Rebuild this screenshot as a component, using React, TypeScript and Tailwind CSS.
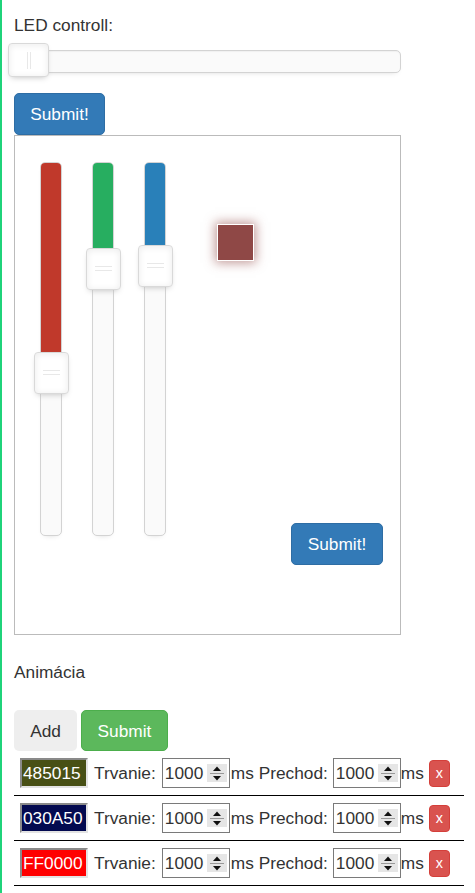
import React from "react";

type Step = { color: string; hex: string };

const steps: Step[] = [
  { color: "#485015", hex: "485015" },
  { color: "#030A50", hex: "030A50" },
  { color: "#FF0000", hex: "FF0000" },
];

function Handle({ vertical }: { vertical?: boolean }) {
  return (
    <div
      className={
        "absolute bg-white border border-[#d9d9d9] rounded-[4px] shadow-[inset_0_0_1px_#fff,inset_0_1px_7px_#ebebeb,0_3px_6px_-3px_#bbb] " +
        (vertical ? "w-[35px] h-[42px] left-[-7px]" : "w-[41px] h-[34px] top-[-8px] left-[-7px]")
      }
    >
      {vertical ? (
        <>
          <div className="absolute left-[8px] top-[17px] w-[17px] h-px bg-[#e8e8e8]" />
          <div className="absolute left-[8px] top-[21px] w-[17px] h-px bg-[#e8e8e8]" />
        </>
      ) : (
        <>
          <div className="absolute left-[18px] top-[8px] h-[17px] w-px bg-[#e8e8e8]" />
          <div className="absolute left-[21px] top-[8px] h-[17px] w-px bg-[#e8e8e8]" />
        </>
      )}
    </div>
  );
}

function VSlider({ fill, level }: { fill: string; level: number }) {
  // level = px from top where the handle is centred
  return (
    <div className="relative w-[22px] h-[374px] rounded-[5px] bg-[#fafafa] border border-[#d3d3d3] shadow-[inset_0_1px_1px_#f0f0f0,0_3px_6px_-5px_#bbb]">
      <div className="absolute left-0 right-0 top-0 rounded-t-[4px]" style={{ height: level, background: fill }} />
      <div className="absolute" style={{ top: level - 21, left: 0 }}>
        <Handle vertical />
      </div>
    </div>
  );
}

function Spinner() {
  return (
    <div className="ml-auto mr-[2px] w-[20px] h-[18px] bg-[#e6e6e6] flex flex-col items-center justify-center gap-[2px]">
      <svg width="10" height="5" viewBox="0 0 10 5">
        <path d="M1 5 L5 0.5 L9 5 Z" fill="#111" />
      </svg>
      <div className="w-[14px] h-px bg-[#999]" />
      <svg width="10" height="5" viewBox="0 0 10 5">
        <path d="M1 0 L5 4.5 L9 0 Z" fill="#111" />
      </svg>
    </div>
  );
}

function NumBox() {
  return (
    <div className="w-[68px] h-[30px] border border-[#7a7a7a] flex items-center pl-[2px] bg-white">
      <span>1000</span>
      <Spinner />
    </div>
  );
}

export default function App() {
  return (
    <div className="min-h-screen bg-white border-l-2 border-[#1fd37a] pl-[12px] text-[#333] text-[17.3px] leading-[24px] font-['Liberation_Sans',Arial,sans-serif]">
      <div className="pt-[13px]">LED controll:</div>

      {/* main slider */}
      <div className="relative mt-[13px] w-[387px] h-[23px] rounded-[5px] bg-[#fafafa] border border-[#d3d3d3] shadow-[inset_0_1px_1px_#f0f0f0,0_3px_6px_-5px_#bbb]">
        <Handle />
      </div>

      <button className="mt-[20px] block h-[42px] w-[91px] rounded-[5px] bg-[#337ab7] border border-[#2e6da4] text-white">
        Submit!
      </button>

      {/* rgb panel */}
      <div className="w-[387px] h-[500px] border border-[#bbb] pl-[25px] pt-[26px] flex items-start">
        <div className="flex gap-[30px]">
          <VSlider fill="#c0392b" level={210} />
          <VSlider fill="#27ae60" level={106} />
          <VSlider fill="#2980b9" level={103} />
        </div>
        <div className="ml-[51px] mt-[62px] w-[37px] h-[37px] border border-white bg-[#8f4846] shadow-[0_0_10px_2px_rgba(143,72,70,0.55)]" />
        <div className="flex-1 flex justify-end pr-[17px] pt-[361px]">
          <button className="h-[42px] w-[92px] rounded-[5px] bg-[#337ab7] border border-[#2e6da4] text-white">
            Submit!
          </button>
        </div>
      </div>

      <div className="mt-[25px]">Animácia</div>

      <div className="mt-[26px] flex gap-[4px]">
        <button className="h-[41px] w-[63px] rounded-[5px] bg-[#eee] text-[#333]">Add</button>
        <button className="h-[41px] w-[87px] rounded-[5px] bg-[#5cb85c] border border-[#4cae4c] text-white">
          Submit
        </button>
      </div>

      <div className="w-[450px]">
        {steps.map((s) => (
          <div key={s.hex} className="flex items-center pl-[6px] py-[7px] border-b border-black">
            <div
              className="w-[68px] h-[30px] border-2 border-t-[#8a8a8a] border-l-[#8a8a8a] border-b-[#e3e3e3] border-r-[#e3e3e3] text-white pl-[1px] flex items-center"
              style={{ background: s.color }}
            >
              {s.hex}
            </div>
            <span className="ml-[6px] mr-[6px]">Trvanie:</span>
            <NumBox />
            <span className="ml-[1px] mr-[5px]">ms Prechod:</span>
            <NumBox />
            <span>ms</span>
            <button className="ml-[5px] w-[21px] h-[27px] rounded-[4px] bg-[#d9534f] border border-[#d43f3a] text-white text-[14.4px] leading-[20px]">
              x
            </button>
          </div>
        ))}
      </div>
    </div>
  );
}
